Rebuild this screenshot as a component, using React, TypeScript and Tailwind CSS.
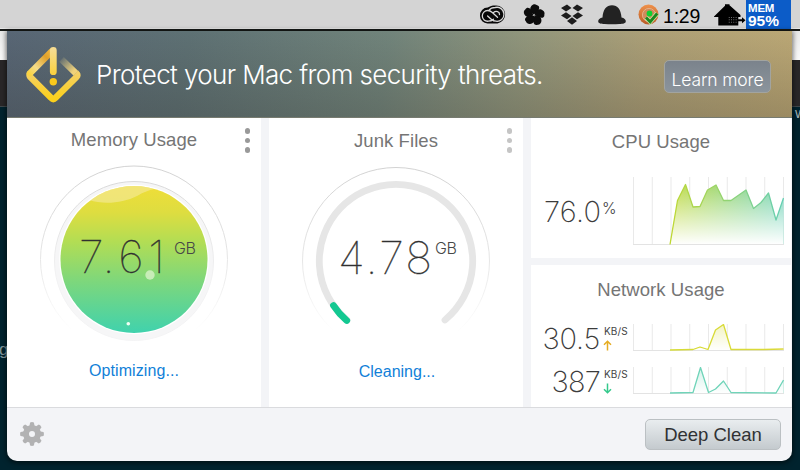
import React from "react";

const LIGHT = "font-['Inter','Liberation_Sans',sans-serif]";
const SANS = "font-['Liberation_Sans',Arial,sans-serif]";

function CreativeCloudIcon() {
  return (
    <svg width="28" height="20" viewBox="0 0 28 20" fill="none">
      <path d="M8.800 2.600C11 .9 14 .3 17.200.5a9 9 0 0 1 1.300 17.900H8.500A7.600 7.600 0 0 1 1 11 7.800 7.800 0 0 1 8.800 2.600Z" fill="#080808" />
      <path d="M14.500 14.200c-1.400 1.300-3 2-5.200 2A5.300 5.300 0 0 1 3.300 11c0-3 2.400-5.500 5.300-5.500 2 0 3.400.8 4.700 2l5.200 4.700" stroke="#d8d8d8" strokeWidth="1.300" strokeLinecap="round" />
      <path d="M10 5.200c1.300-1.700 3.500-2.700 6.200-2.700a7 7 0 1 1 .8 13.700c-1.900 0-3.500-.8-4.800-2L8.600 11" stroke="#d8d8d8" strokeWidth="1.300" strokeLinecap="round" />
      <path d="m14.500 7.500c2.600-2.100 6.200-.8 6 2" stroke="#d8d8d8" strokeWidth="1.300" strokeLinecap="round" />
    </svg>
  );
}

function FlowerIcon() {
  return (
    <svg width="22" height="22" viewBox="-11 -11 22 22">
      {[4, 76, 148, 220, 292].map((a) => (
        <path key={a} transform={`rotate(${a})`} d="M-.3-.6C-4.200-2.200-5.200-6-3.300-8.800-2-10.700.3-11.300 1.900-10.200 4-9.900 5-8.600 4.600-6.700 4.200-4.200 2.100-2.700-.3-.6Z" fill="#0c0c0c" />
      ))}
    </svg>
  );
}

function DropboxIcon() {
  return (
    <svg width="24" height="22" viewBox="0 0 24 22" fill="#1d1d1d">
      <path d="M7 .5 11.500 4 6 7.600 1 4Z M17 .5 23 4 18 7.600 12.500 4Z M6 8.200 11.500 12 7 15.200 1 11.500Z M18 8.200 23 11.500 17 15.200 12.500 12Z M12 13.200 17 17 12 20.800 7 17Z" />
    </svg>
  );
}

function BowlerIcon() {
  return (
    <svg width="28" height="20" viewBox="0 0 28 20" fill="#222">
      <path d="M4.500 12.500C5 4.500 8.500.3 14 .3s9 4.200 9.500 12.200c2.700.6 4.300 2 4.300 3.700 0 2.300-3 2.600-6.300 2.800-4.800.4-10.200.4-15 0C3.200 18.800.2 18.500.2 16.200c0-1.700 1.600-3.100 4.300-3.700Z" />
    </svg>
  );
}

function StatusIcon() {
  return (
    <svg width="22" height="22" viewBox="0 0 22 22">
      <defs>
        <linearGradient id="st" x1="0" y1="0" x2="0" y2="1"><stop stopColor="#ef914b" /><stop offset="1" stopColor="#b95c27" /></linearGradient>
      </defs>
      <circle cx="10.500" cy="10.500" r="10" fill="url(#st)" />
      <circle cx="11" cy="11" r="6.600" fill="#cf8a5c" stroke="#e4b48e" strokeWidth=".9" />
      <path d="m8 13.500 4.200 4.300 7-8.300" fill="none" stroke="#ccefae" strokeWidth="4.400" />
      <path d="m8 13.500 4.200 4.300 7-8.300" fill="none" stroke="#1e861e" strokeWidth="2.900" />
      <circle cx="11.500" cy="9.500" r="2.900" fill="#0ed232" />
    </svg>
  );
}

function HouseIcon() {
  return (
    <svg width="32" height="23" viewBox="0 0 32 23" fill="#000">
      <path d="M0 12.500 11 1.700V.2h4.500v1L26.500 11v2h-2.200v8.500H4.300V13H0Z" />
      <path d="M24 15.300h4v-2l3.500 3-3.500 3v-2h-4Z" />
      {[0, 1, 2, 3].map((i) => [0, 1, 2].map((j) => (
        <rect key={`${i}-${j}`} x={14.800 + i * 2.300} y={13 + j * 2.400} width=".8" height=".8" fill="#aaa" />
      )))}
    </svg>
  );
}

function MenuBar() {
  return (
    <header className="flex h-[31px] w-full border-b-2 border-[#171a18] bg-[#d4d4d4] shadow-[inset_0_-1px_0_#e8e8e8]">
      <div className="flex h-[29px] flex-1 items-center justify-end">
        <div className="mr-[16px] flex"><CreativeCloudIcon /></div>
        <div className="mr-[15px] flex"><FlowerIcon /></div>
        <div className="mr-[14px] flex"><DropboxIcon /></div>
        <div className="mr-[12px] flex"><BowlerIcon /></div>
        <div className="mr-[3px] flex"><StatusIcon /></div>
        <div className={`${SANS} mt-[4px] w-[38px] whitespace-nowrap text-[19.500px] leading-none tracking-[-0.2px] text-black`}>1:29</div>
        <div className="ml-[13px] mt-[1px] flex"><HouseIcon /></div>
      </div>
      <div className={`${SANS} h-[29px] w-[45px] whitespace-nowrap bg-[#0c5cc8] pl-[2px] font-bold text-white`}>
        <div className="pt-[2px] text-[11.500px] leading-[12px] tracking-[-0.2px]">MEM</div>
        <div className="text-[15.500px] leading-[13px]">95%</div>
      </div>
      <div className="w-[9px]" />
    </header>
  );
}

function WarningIcon() {
  return (
    <svg width="56" height="60" viewBox="0 0 56 60" fill="none">
      <defs>
        <linearGradient id="wg" x1="0" y1="0" x2="0" y2="1"><stop stopColor="#f4d069" /><stop offset=".5" stopColor="#f8d03f" /><stop offset="1" stopColor="#fbd01c" /></linearGradient>
        <linearGradient id="wl" x1="4" y1="29" x2="27" y2="7" gradientUnits="userSpaceOnUse"><stop stopColor="#fbd440" /><stop offset=".3" stopColor="#f5dc8a" /><stop offset=".75" stopColor="#e0a02a" /><stop offset="1" stopColor="#efb63f" /></linearGradient>
        <linearGradient id="wr" x1="36" y1="13" x2="52" y2="29" gradientUnits="userSpaceOnUse"><stop stopColor="#ecd68b" stopOpacity=".05" /><stop offset=".8" stopColor="#f0d27a" /></linearGradient>
        <linearGradient id="wb" x1="0" y1="5" x2="0" y2="29" gradientUnits="userSpaceOnUse"><stop stopColor="#f6dc90" /><stop offset="1" stopColor="#fad140" /></linearGradient>
      </defs>
      <path d="m36.500 14.300 14.500 14" stroke="url(#wr)" strokeWidth="6.500" />
      <path d="M5.300 28Q3.800 30 5.300 32L26 52.800q2.300 2.300 4.600 0L51.500 32Q53.200 30 51 28" stroke="url(#wg)" strokeWidth="6.500" strokeLinejoin="round" />
      <path d="M5 28.300 26.300 6.800" stroke="url(#wl)" strokeWidth="6.500" strokeLinecap="round" />
      <path d="M28.300 5.500v21.200" stroke="url(#wb)" strokeWidth="6.800" strokeLinecap="round" />
      <circle cx="28.300" cy="36.800" r="3.700" fill="#fac91b" />
    </svg>
  );
}

function Banner() {
  return (
    <div className="flex h-[87px] items-start border-b border-[#777b70] bg-[linear-gradient(to_bottom,rgba(0,0,0,0),rgba(40,35,30,0.22)),linear-gradient(100deg,#586675_0%,#5e7174_23%,#71847b_48%,#91967c_65%,#ada077_81%,#bca875_100%)] pl-[18px] pt-[14px]">
      <WarningIcon />
      <div className={`${LIGHT} ml-[15px] mt-[14px] w-[479px] whitespace-nowrap text-[26px] font-light leading-[32px] tracking-[-0.62px] text-white`}>Protect your Mac from security threats.</div>
      <button className={`${LIGHT} ml-[89px] mt-[15px] h-[33px] w-[107px] whitespace-nowrap rounded-[5px] border border-[#a2a4a0] bg-linear-to-b from-[#7b838c] to-[#8b949c] pt-[6px] text-[17.500px] font-light leading-none tracking-[-0.15px] text-white`}>Learn more</button>
    </div>
  );
}

function Dots({ className }: { className: string }) {
  return (
    <div className={`absolute right-[11px] flex flex-col gap-[4px] ${className}`}>
      {[0, 1, 2].map((i) => <span key={i} className="size-[5.500px] rounded-full bg-current" />)}
    </div>
  );
}

function MemoryGauge() {
  return (
    <svg width="192" height="192" viewBox="38 164 192 192" fill="none">
      <defs>
        <linearGradient id="fade" x1="0" y1="0" x2="0" y2="1"><stop stopColor="#d2d2d2" /><stop offset=".5" stopColor="#e6e6e6" /><stop offset=".88" stopColor="#fff" /></linearGradient>
        <linearGradient id="ring" x1="0" y1="0" x2="0" y2="1"><stop stopColor="#d9d9d9" /><stop offset=".6" stopColor="#f2f2f3" /><stop offset="1" stopColor="#f4f4f5" /></linearGradient>
        <linearGradient id="liquid" x1="0" y1="186" x2="0" y2="333" gradientUnits="userSpaceOnUse"><stop stopColor="#efde38" /><stop offset=".18" stopColor="#dedd40" /><stop offset=".38" stopColor="#b2dd54" /><stop offset=".65" stopColor="#7dd77c" /><stop offset="1" stopColor="#40d2ad" /></linearGradient>
        <clipPath id="disc"><circle cx="134" cy="259.500" r="73.500" /></clipPath>
      </defs>
      <circle cx="134" cy="259.500" r="93.500" stroke="url(#fade)" />
      <circle cx="134" cy="261" r="79.500" fill="#f6f6f7" stroke="url(#ring)" />
      <circle cx="134" cy="259.500" r="74.800" fill="#fff" />
      <circle cx="134" cy="259.500" r="73.500" fill="url(#liquid)" />
      <path clipPath="url(#disc)" d="M89 200C104 205 123 203 137 196 144 192 149 190 154 189L140 182 105 183Z" fill="#f5ebaa" fillOpacity=".55" />
      <circle cx="150" cy="275" r="4.700" fill="#d8f1c8" fillOpacity=".8" />
      <circle cx="128.300" cy="323.800" r="1.800" fill="#f2fff5" />
    </svg>
  );
}

function JunkGauge() {
  return (
    <svg width="192" height="192" viewBox="300 166 192 192" fill="none">
      <circle cx="396" cy="261" r="93.500" stroke="url(#fade)" />
      <path d="M347 320A76.700 76.700 0 1 1 445 320" stroke="#e6e6e6" strokeWidth="6.800" strokeLinecap="round" />
      <path d="M333.500 305.500Q339 314 346.700 320.500" stroke="#13c891" strokeWidth="6.800" strokeLinecap="round" />
    </svg>
  );
}

const titleClass = "whitespace-nowrap text-center text-[18.500px] leading-[22px] tracking-[0.08px] text-[#757575]";

function GaugeValue({ value, unit, valueClass, unitClass }: { value: string; unit: string; valueClass: string; unitClass: string }) {
  return (
    <div className={`absolute flex items-start whitespace-nowrap text-[#303030] ${valueClass}`}>
      <span className={`${LIGHT} text-[45px] font-thin leading-[54px] [-webkit-text-stroke:0.35px_#303030]`}>{value}</span>
      <span className={`${LIGHT} absolute text-[16px] font-light leading-none tracking-[-0.3px] text-[#484848] ${unitClass}`}>{unit}</span>
    </div>
  );
}

const GRID = [0, 1, 2, 3, 4, 5, 6, 7, 8];

function Chart({ height, points, start, end, id, fade }: { height: number; points: string; start: string; end: string; id: string; fade: number }) {
  return (
    <svg className="shrink-0" width="151" height={height} viewBox={`0 0 151 ${height}`} fill="none">
      <defs>
        <linearGradient id={id} x1="37" y1="0" x2="151" y2="0" gradientUnits="userSpaceOnUse"><stop stopColor={start} /><stop offset="1" stopColor={end} /></linearGradient>
        <linearGradient id={`${id}f`} x1="0" y1="0" x2="0" y2="1"><stop stopColor="#fff" stopOpacity={fade} /><stop offset="1" stopColor="#fff" /></linearGradient>
      </defs>
      {GRID.map((i) => <path key={i} d={`M${0.5 + i * 18.75} 0V${height}`} stroke="#e9e9e9" />)}
      <path d={`M${points}V${height - 0.5}H37Z`} fill={`url(#${id})`} />
      <path d={`M${points}V${height - 0.5}H37Z`} fill={`url(#${id}f)`} />
      <path d={`M0 ${height - 0.5}H151`} stroke="#e3e3e3" />
      <path d={`M${points}`} stroke={`url(#${id})`} strokeWidth="1.300" strokeLinejoin="round" />
    </svg>
  );
}

function NetRow({ value, up, children }: { value: string; up: boolean; children: React.ReactNode }) {
  return (
    <div className="flex h-[43px] items-start">
      <div className={`${LIGHT} whitespace-nowrap text-right text-[29px] font-extralight leading-[29px] text-[#3c3c3c] ${up ? "w-[69px] tracking-[-0.2px]" : "w-[69px] tracking-[-0.8px]"}`}>{value}</div>
      <div className="ml-[4px] flex w-[29px] flex-col pt-[2px]">
        <span className={`${LIGHT} whitespace-nowrap text-[10px] leading-[10px] tracking-[0.15px] text-[#444]`}>KB/S</span>
        <svg className="-ml-px mt-[4px]" width="9" height="11" viewBox="0 0 9 11" fill="none" stroke={up ? "#e5ac22" : "#35c98c"} strokeWidth="1.500">
          <path d={up ? "M4.500 10.500V1.500M1 4.800 4.500 1.300 8 4.800" : "M4.500.5v9M1 6.200l3.500 3.500L8 6.200"} />
        </svg>
      </div>
      {children}
    </div>
  );
}

function Gear() {
  return (
    <svg width="24" height="24" viewBox="-12 -12 24 24">
      {[0, 45, 90, 135, 180, 225, 270, 315].map((a) => <path key={a} transform={`rotate(${a})`} d="M-2.800-7-1.900-11.500q1.900-.8 3.800 0L2.800-7Z" fill="#b2b2b3" />)}
      <circle r="6" fill="none" stroke="#b2b2b3" strokeWidth="6" />
    </svg>
  );
}

export default function App() {
  return (
    <div className={`${SANS} relative h-[470px] w-[800px] overflow-hidden bg-[#00232e]`}>
      <div className="absolute inset-x-0 top-[31px] h-[29px] bg-linear-to-b from-[#e8e8e8] to-[#fafafa]" />
      <div className="absolute inset-x-0 top-[60px] h-[47px] border-b border-[#40484b] bg-[#292728]" />
      <span className="absolute left-[-1px] top-[340px] text-[17px] leading-[20px] text-[#81969c]">g</span>
      <span className="absolute left-[795px] top-[104px] text-[15px] leading-[18px] text-[#a3b2b6]">w</span>
      <MenuBar />
      <main className="absolute left-[7px] top-[31px] flex h-[430px] w-[785px] flex-col overflow-hidden rounded-b-[10px] bg-[#f3f4f7] shadow-[0_1px_5px_1px_rgba(0,0,0,0.55)]">
        <Banner />
        <div className="flex h-[289px] gap-[8px]">
          <section className="relative w-[254px] bg-white">
            <h2 className={`${titleClass} pt-[11px]`}>Memory Usage</h2>
            <Dots className="top-[10px] text-[#999]" />
            <div className="ml-[31px] mt-[13px]"><MemoryGauge /></div>
            <GaugeValue value="7.61" unit="GB" valueClass="left-[72px] top-[112px] tracking-[4.600px]" unitClass="left-[95px] top-[10px]" />
            <div className="mt-[5px] text-center text-[16px] leading-[20px] tracking-[0.1px] text-[#117fd8]">Optimizing...</div>
          </section>
          <section className="relative w-[254px] bg-white">
            <h2 className={`${titleClass} pt-[12px]`}>Junk Files</h2>
            <Dots className="top-[10px] text-[#c5c5c5]" />
            <div className="ml-[31px] mt-[14px]"><JunkGauge /></div>
            <GaugeValue value="4.78" unit="GB" valueClass="left-[69px] top-[113px] tracking-[2.200px]" unitClass="left-[97px] top-[9px]" />
            <div className="mt-[4px] pl-[2px] text-center text-[16px] leading-[20px] text-[#117fd8]">Cleaning...</div>
          </section>
          <div className="flex w-[260px] flex-col gap-[7px]">
            <section className="h-[140px] bg-white">
              <h2 className={`${titleClass} pt-[13px]`}>CPU Usage</h2>
              <div className="mt-[24px] flex items-start">
                <div className={`${LIGHT} ml-[13px] mt-[20px] w-[58px] whitespace-nowrap text-[29px] font-extralight leading-[29px] tracking-[0.2px] text-[#3c3c3c]`}>76.0</div>
                <div className={`${LIGHT} mt-[22px] w-[31px] text-[15.500px] font-light leading-[20px] text-[#444]`}>%</div>
                <Chart id="cpu" height={68} fade={0.1} start="#bfd832" end="#64cfb4" points="37 67.500 44.500 23.500 52.500 7.500 60 30 67 29.500 74.500 13 83 8 90.500 23.500 98 23.500 113 13 120.500 31.500 128 25.500 135.500 16 143 43 150.500 21" />
              </div>
            </section>
            <section className="h-[142px] bg-white">
              <h2 className={`${titleClass} mb-[23px] pt-[14px]`}>Network Usage</h2>
              <NetRow value="30.5" up>
                <Chart id="up" height={27} fade={0.7} start="#d6dc36" end="#dbd93a" points="37 26 60 25.500 67 23 75 25.500 82.500 6 90.500 .5 98 25.500 131 25.500 150.500 25" />
              </NetRow>
              <NetRow value="387" up={false}>
                <Chart id="down" height={27} fade={0.7} start="#70d4b9" end="#70d4b9" points="37 26 60 25.500 67.500 .5 75.500 25.500 82.500 22 90.500 14 98 25.500 143 26 150.500 13" />
              </NetRow>
            </section>
          </div>
        </div>
        <footer className="flex flex-1 items-center justify-between border-t border-[#dadbde] pb-px pl-[13px] pr-[11px]">
          <Gear />
          <button className="h-[31px] w-[136px] whitespace-nowrap rounded-[5px] border border-[#bbc0c3] bg-linear-to-b from-[#e9edef] to-[#c4cace] pt-[3px] text-[18.500px] leading-none text-[#303234]">Deep Clean</button>
        </footer>
      </main>
    </div>
  );
}
